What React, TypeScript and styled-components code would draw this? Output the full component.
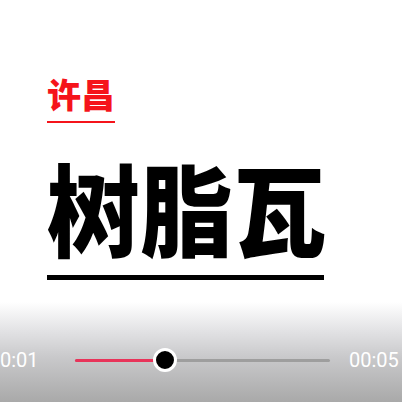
import styled, { createGlobalStyle } from 'styled-components';

const Global = createGlobalStyle`
  html, body { margin: 0; padding: 0; background: #fff; }
  body { font-family: "Noto Sans CJK SC", "Noto Sans", sans-serif; overflow: hidden; }
`;

const Screen = styled.div`
  height: 402px;
  width: 402px;
  display: flex;
  flex-direction: column;
  overflow: hidden;
`;

const Poster = styled.div`
  flex: 1;
  padding: 74px 0 0 47px;
  display: flex;
  flex-direction: column;
  align-items: flex-start;
`;

const City = styled.div`
  color: #f5141b;
  font-size: 34px;
  font-weight: 900;
  line-height: 40px;
  padding-bottom: 7px;
  border-bottom: 2px solid #f5141b;
`;

const Title = styled.div`
  margin-top: 28px;
  color: #000;
  font-size: 93px;
  font-weight: 900;
  line-height: 110px;
  transform: scaleY(1.08);
  transform-origin: center;
`;

const Rule = styled.div`
  margin-top: 14px;
  width: 277px;
  height: 5px;
  background: #000;
`;

const Controls = styled.div`
  height: 100px;
  padding-top: 16px;
  box-sizing: border-box;
  background: linear-gradient(#fff 0%, #e6e6e8 25%, #c9c9cb 55%, #a9a9a9 100%);
  display: flex;
  align-items: center;
  font-family: Roboto, "Noto Sans", sans-serif;
`;

const Time = styled.span<{ $w: number }>`
  width: ${p => p.$w}px;
  color: #fff;
  font-size: 20px;
  flex-shrink: 0;
  white-space: nowrap;
`;

const Track = styled.div`
  flex: 1;
  margin: 0 19px 0 37px;
  height: 3px;
  border-radius: 2px;
  background: #9e9e9e;
  position: relative;
`;

const Fill = styled.div`
  height: 100%;
  border-radius: 2px;
  background: #e8345a;
`;

const Thumb = styled.div`
  position: absolute;
  top: 50%;
  width: 18px;
  height: 18px;
  border-radius: 50%;
  background: #000;
  border: 3px solid #fff;
  transform: translate(-50%, -50%);
`;

export default function App() {
  const progress = 0.352;
  return (
    <>
      <Global />
      <Screen>
        <Poster>
          <City>许昌</City>
          <Title>树脂瓦</Title>
          <Rule />
        </Poster>
        <Controls>
          <Time $w={38}>0:01</Time>
          <Track>
            <Fill style={{ width: `${progress * 100}%` }} />
            <Thumb style={{ left: `${progress * 100}%` }} />
          </Track>
          <Time $w={53}>00:05</Time>
        </Controls>
      </Screen>
    </>
  );
}
